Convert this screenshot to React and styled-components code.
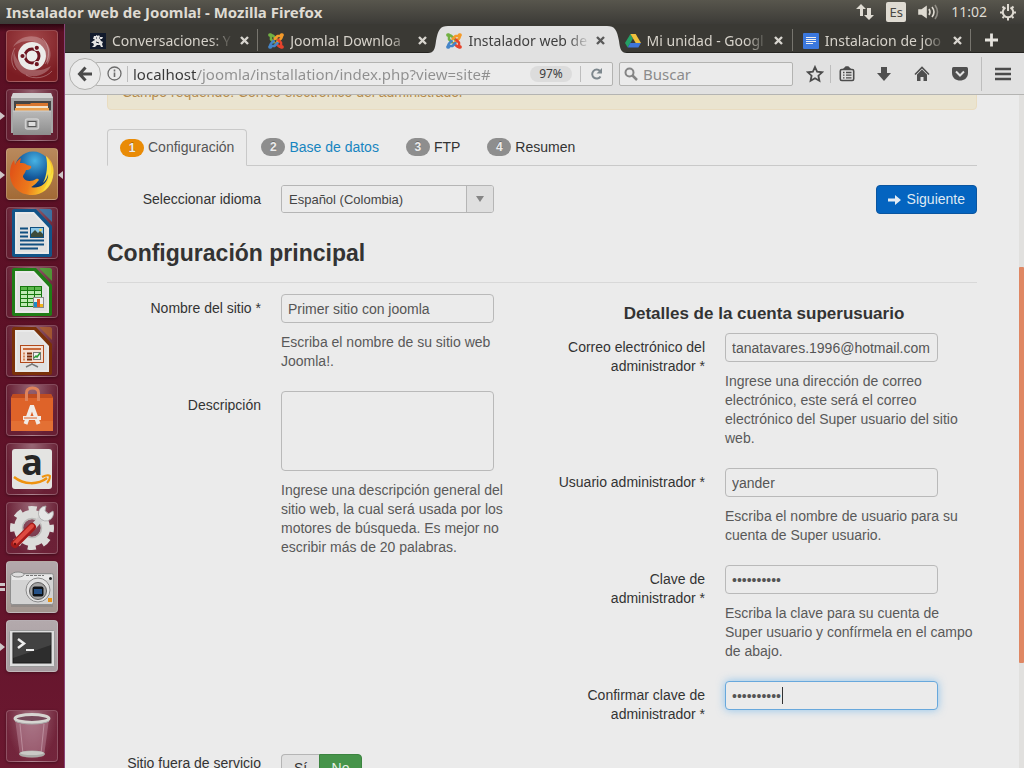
import React from "react";
import styled, { createGlobalStyle, css } from "styled-components";

const GlobalStyle = createGlobalStyle`
  *, *::before, *::after { box-sizing: border-box; }
  body { margin: 0; background: #ebebeb; overflow: hidden; }
  button, input, select, textarea { font: inherit; color: inherit; margin: 0; }
`;

const uiFont = `"Noto Sans", "Open Sans", sans-serif`;
const pageFont = `"Liberation Sans", Arial, sans-serif`;

/* ---------- desktop shell ---------- */

const Desktop = styled.div`
  display: flex;
  flex-direction: column;
  height: 100vh;
  font-family: ${uiFont};
`;

const TopPanel = styled.header`
  flex: none;
  display: flex;
  align-items: center;
  justify-content: space-between;
  height: 24px;
  padding: 0 7px 0 6px;
  background: linear-gradient(#58564d, #3c3b37);
  color: #dfdbd2;
  font-size: 14px;
  line-height: 20px;
`;

const WindowTitle = styled.h1`
  margin: 0;
  font-size: 15px;
  font-weight: 700;
  white-space: nowrap;
`;

const Indicators = styled.div`
  display: flex;
  align-items: center;
  gap: 12px;
  svg { display: block; }
`;

const Keyboard = styled.span`
  width: 20px;
  height: 20px;
  border-radius: 2px;
  background: #dfdbd2;
  color: #4a4843;
  font-size: 13px;
  line-height: 20px;
  text-align: center;
`;

const Workspace = styled.div`
  flex: 1;
  display: flex;
  min-height: 0;
`;

const Launcher = styled.nav`
  flex: none;
  display: flex;
  flex-direction: column;
  gap: 7px;
  width: 65px;
  padding: 6px;
  border-right: 1px solid #8a4478;
  background: linear-gradient(#2d0510, #5b1024 8px, #5d1127 50%, #6b1830);
`;

const Tile = styled.button`
  position: relative;
  flex: none;
  width: 52px;
  height: 52px;
  padding: 0;
  border: 1px solid rgba(255, 255, 255, 0.2);
  border-radius: 4px;
  background: ${(p) =>
    p.$tint ||
    "radial-gradient(ellipse at 50% 0, rgba(255,255,255,.36), rgba(255,255,255,.06) 75%)"};
  box-shadow: 0 1px 3px rgba(0, 0, 0, 0.35);
  > svg { display: block; width: 52px; height: 52px; margin: -1px; }
  ${(p) => p.$last && css`margin-top: auto;`}
`;

const Running = styled.i`
  position: absolute;
  top: 22px;
  left: -7px;
  border: 4px solid transparent;
  border-left: 5px solid #cfc6c8;
  border-right: 0;
`;

const Focused = styled.i`
  position: absolute;
  top: 22px;
  right: -6px;
  border: 4px solid transparent;
  border-right: 5px solid #cfc6c8;
  border-left: 0;
`;

const TwoWindows = styled.i`
  position: absolute;
  top: 21px;
  left: -7px;
  width: 5px;
  height: 8px;
  border: solid #cfc6c8;
  border-width: 3px 0;
`;

/* ---------- browser chrome ---------- */

const Browser = styled.section`
  flex: 1;
  display: flex;
  flex-direction: column;
  min-width: 0;
`;

const TabStrip = styled.div`
  flex: none;
  display: flex;
  height: 29px;
  padding-left: 15px;
  background: #3a3934;
  border-bottom: 1px solid #242320;
`;

const BrowserTab = styled.div`
  position: relative;
  flex: 1 1 0;
  display: flex;
  align-items: center;
  gap: 6px;
  min-width: 0;
  height: 29px;
  padding: 4px 9px 0 10px;
  color: ${(p) => (p.$active ? "#3f3f3f" : "#d6d2ca")};
  font-size: 14px;
  > svg { flex: none; position: relative; }
  &::after {
    content: "";
    display: ${(p) => (p.$divider ? "block" : "none")};
    position: absolute;
    right: 0;
    top: 5px;
    width: 1px;
    height: 22px;
    background: #77756e;
  }
`;

const TabTitle = styled.span`
  position: relative;
  flex: 1;
  overflow: hidden;
  white-space: nowrap;
  line-height: 20px;
  mask-image: linear-gradient(90deg, #000 calc(100% - 22px), transparent);
`;

const ClearButton = styled.button`
  position: relative;
  display: flex;
  align-items: center;
  justify-content: center;
  flex: none;
  width: ${(p) => p.$w || 10}px;
  padding: 0;
  border: 0;
  background: none;
`;

const TabShape = styled.span`
  position: absolute;
  inset: 2px -12px 0 -8px;
  display: flex;
  i { flex: 1; background: #e1e1e1; }
`;

const Toolbar = styled.div`
  flex: none;
  display: flex;
  align-items: center;
  height: 42px;
  padding-left: 4px;
  background: #e1e1e1;
  border-bottom: 1px solid #b4b4b2;
  color: #4c4c4c;
`;

const Back = styled.button`
  position: relative;
  z-index: 1;
  flex: none;
  display: flex;
  align-items: center;
  justify-content: center;
  width: 32px;
  height: 32px;
  margin-right: -6px;
  padding: 0;
  border: 1px solid #b0b0ae;
  border-radius: 50%;
  background: #ebebeb;
`;

const FieldBox = styled.div`
  display: flex;
  align-items: center;
  height: 24px;
  border: 1px solid #b3b3b1;
  border-radius: 2px;
  background: #ebebeb;
  font-size: 15px;
`;

const UrlBox = styled(FieldBox)`
  flex: 1;
  min-width: 0;
  padding: 0 4px 0 11px;
`;

const SearchBox = styled(FieldBox)`
  flex: none;
  width: 174px;
  margin-left: 6px;
  padding: 0 4px;
  gap: 5px;
  color: #8b8b8b;
  input::placeholder { color: #8b8b8b; opacity: 1; }
`;

const PlainInput = styled.input`
  flex: 1;
  min-width: 0;
  padding: 0;
  border: 0;
  outline: 0;
  background: none;
  line-height: 20px;
`;

const UrlInput = styled(PlainInput)`
  background: linear-gradient(90deg, #383838 64px, #8f8f8f 64px);
  background-clip: text;
  -webkit-background-clip: text;
  -webkit-text-fill-color: transparent;
`;

const Zoom = styled.span`
  flex: none;
  width: 42px;
  height: 16px;
  border-radius: 8px;
  background: #dcdcdc;
  color: #3c3c3c;
  font-size: 12px;
  line-height: 16px;
  text-align: center;
`;

const Bar = styled.span`
  flex: none;
  width: 1px;
  height: ${(p) => p.$h}px;
  margin: ${(p) => p.$m || "0"};
  background: #bdbdbd;
`;

/* ---------- page ---------- */

const Viewport = styled.div`
  flex: 1;
  display: flex;
  min-height: 0;
  background: #ebebeb;
`;

const Page = styled.main`
  flex: 1;
  min-width: 0;
  overflow: hidden;
  padding: 0 42px;
  color: #333;
  font: 14px/19px ${pageFont};
`;

const Scrollbar = styled.div`
  flex: none;
  width: 5px;
  padding-top: 172px;
  background: #e1e0de;
  &::before {
    content: "";
    display: block;
    height: 79%;
    border-radius: 1px;
    background: #df8763;
  }
`;

const Alert = styled.div`
  margin-top: -22px;
  padding: 9px 14px 7px;
  border: 1px solid #e9dcc0;
  border-radius: 4px;
  background: #eae4d0;
  color: #b58b4c;
`;

const Steps = styled.ol`
  display: flex;
  gap: 1px;
  margin: 19px 0;
  padding: 0;
  list-style: none;
  border-bottom: 1px solid #c9c9c9;
`;

const Step = styled.li`
  display: flex;
  align-items: center;
  gap: 4px;
  height: 36px;
  margin-bottom: -1px;
  padding: 0 12px;
  border: 1px solid transparent;
  border-radius: 4px 4px 0 0;
  color: ${(p) => (p.$active ? "#555" : "#333")};
  ${(p) =>
    p.$active &&
    css`
      height: 37px;
      border-color: #c9c9c9;
      border-bottom-color: #ebebeb;
      background: #ebebeb;
    `}
  a { color: #1785c0; text-decoration: none; }
`;

const Badge = styled.span`
  width: 24px;
  height: 18px;
  border-radius: 9px;
  background: ${(p) => (p.$active ? "#e98b06" : "#8e8e8e")};
  color: #ebebeb;
  font-size: 12px;
  font-weight: 700;
  line-height: 18px;
  text-align: center;
  text-shadow: 0 -1px 0 rgba(0, 0, 0, 0.25);
`;

const TopRow = styled.div`
  display: flex;
  justify-content: space-between;
  align-items: flex-start;
`;

const Row = styled.div`
  display: grid;
  grid-template-columns: 154px 1fr;
  column-gap: 20px;
  margin-bottom: ${(p) => (p.$tight ? 0 : 20)}px;
`;

const Label = styled.label`
  padding-top: ${(p) => (p.$flush ? 0 : 5)}px;
  text-align: right;
`;

const inputLook = css`
  display: block;
  width: 213px;
  border: 1px solid #b9b9b9;
  border-radius: 4px;
  background: #ebebeb;
  color: #555;
  outline: 0;
`;

const TextInput = styled.input`
  ${inputLook}
  height: 29px;
  padding: 0 6px;
  ${(p) =>
    p.$focused &&
    css`
      border-color: #68a8dc;
      box-shadow: 0 0 8px rgba(82, 168, 236, 0.6);
      background: linear-gradient(#333, #333) 56px 50% / 1px 17px no-repeat #ebebeb;
    `}
`;

const TextArea = styled.textarea`
  ${inputLook}
  height: 80px;
  resize: none;
`;

const Help = styled.p`
  margin: 10px 0 0;
  color: #595959;
`;

const SelectBox = styled.div`
  display: flex;
  width: 213px;
  height: 28px;
  border: 1px solid #b5b5b5;
  border-radius: 3px;
  overflow: hidden;
  color: #444;
  font-size: 13px;
  select {
    flex: 1;
    padding: 0 7px;
    border: 0;
    border-right: 1px solid #b5b5b5;
    outline: 0;
    appearance: none;
    background: #ebebeb;
  }
  span {
    display: flex;
    align-items: center;
    justify-content: center;
    width: 26px;
    background: #dfdfdf;
  }
`;

const NextButton = styled.button`
  display: flex;
  align-items: center;
  gap: 6px;
  height: 29px;
  padding: 0 11px;
  border: 1px solid #0a55a0;
  border-radius: 4px;
  background: #0464c0;
  color: #dfe9f3;
`;

const SectionTitle = styled.h2`
  margin: 21px 0 11px;
  padding-bottom: 11px;
  border-bottom: 1px solid #d8d8d8;
  font-size: 23px;
  line-height: 36px;
`;

const Columns = styled.div`
  display: grid;
  grid-template-columns: 1fr 1fr;
  column-gap: 18px;
`;

const SiteColumn = styled.div`
  padding-right: 16px;
`;

const AccountTitle = styled.h3`
  margin: 10px 0;
  font-size: 17px;
  line-height: 19px;
  text-align: center;
`;

const Toggle = styled.div`
  display: flex;
  height: 29px;
`;

const ToggleButton = styled.button`
  width: ${(p) => (p.$on ? 43 : 38)}px;
  padding: 0;
  border: 1px solid ${(p) => (p.$on ? "#3c8440" : "#b5b5b5")};
  border-right-width: ${(p) => (p.$on ? 1 : 0)}px;
  border-radius: ${(p) => (p.$on ? "0 4px 4px 0" : "4px 0 0 4px")};
  background: ${(p) => (p.$on ? "#46944a" : "#e1e1e1")};
  color: ${(p) => (p.$on ? "#e4eee4" : "#333")};
`;

const StatusSection = styled.div`
  width: 50%;
  padding: 10px 9px 0 0;
`;

/* ---------- small drawings ---------- */

const Close = ({ c }) => (
  <svg width="9" height="9" viewBox="0 0 9 9">
    <path d="M1 1l7 7M8 1L1 8" stroke={c} strokeWidth="2.4" />
  </svg>
);

const Joomla = () => (
  <svg width="16" height="16" viewBox="0 0 16 16" fill="none" strokeWidth="2.5" strokeLinecap="round" strokeLinejoin="round">
    <path d="M2.2 2.2C5 1.5 6 3.5 8 5.5l2 2M3 3v3.4l3 3" stroke="#72b043" />
    <path d="M13.8 2.2C14.5 5 12.5 6 10.5 8l-2 2M13 3H9.6l-3 3" stroke="#f49a2a" />
    <path d="M13.8 13.8C11 14.5 10 12.5 8 10.5M13 13V9.6l-3-3" stroke="#e6432c" />
    <path d="M2.2 13.8C1.5 11 3.5 10 5.5 8M3 13h3.4l3-3" stroke="#4585c8" />
    <path d="M1.8 2h.8" stroke="#72b043" strokeWidth="3.4" />
    <path d="M13.4 2h.8" stroke="#f49a2a" strokeWidth="3.4" />
    <path d="M13.4 14h.8" stroke="#e6432c" strokeWidth="3.4" />
    <path d="M1.8 14h.8" stroke="#4585c8" strokeWidth="3.4" />
  </svg>
);

const Knight = () => (
  <svg width="16" height="16" viewBox="0 0 16 16">
    <rect width="16" height="16" fill="#111a2c" />
    <path d="M3 6l1-3h2V2l2 1 1-1 1 2h3l-1 2h-2l1 2 2 1-1 2 1 3h-2l-1-2H7l-2 2H2l2-2-1-2H1l2-2 2-1-1-1z" fill="#e2e2e2" />
    <path d="M6 5h1M9 5h1M6 9l3 1" stroke="#111a2c" />
  </svg>
);

const Drive = () => (
  <svg width="16" height="16" viewBox="0 0 16 16">
    <path d="M5.4 1L8 5.6 2.7 14.6 0 10z" fill="#25a065" />
    <path d="M5.4 1h5.3L16 10h-5.3z" fill="#f0c03c" />
    <path d="M5.3 10H16l-2.7 4.6H2.7z" fill="#3f75d8" />
  </svg>
);

const Docs = () => (
  <svg width="16" height="16" viewBox="0 0 16 16">
    <rect width="16" height="16" rx="1" fill="#3b78de" />
    <path d="M3 4.5h10M3 6.5h10M3 8.5h10M3 10.5h7" stroke="#eee" />
  </svg>
);

const Curve = ({ flip }) => (
  <svg width="20" height="27" viewBox="0 0 20 27">
    <path
      d={flip ? "M20 27C14 27 13 23 12 15C10 4 8 0 0 0V27Z" : "M0 27C6 27 7 23 8 15C10 4 12 0 20 0V27Z"}
      fill="#e1e1e1"
    />
  </svg>
);

const UbuntuArt = () => (
  <svg viewBox="0 0 52 52">
    <path d="M7 17C13 4 34 2 42 15c4 7 3 15-1 20 0-12-6-24-18-24-8 0-13 3-16 6z" fill="#fff" opacity=".25" />
    <path d="M8 21c-3 13 5 24 17 25 10 1 17-4 20-10-8 5-18 6-26 1C13 33 9 28 8 21z" fill="#fff" opacity=".25" />
    <path d="M36 8c7 5 9 18 3 26M10 40c-6-6-5-16-1-22M20 45c8 5 20 3 26-4" fill="none" stroke="#fff" opacity=".3" />
    <circle cx="26" cy="26" r="14" fill="#ececea" />
    <circle cx="26" cy="26" r="7" fill="none" stroke="#6d1520" strokeWidth="3" />
    <g stroke="#ececea" strokeWidth="1.2" fill="#6d1520">
      <circle cx="16.5" cy="26" r="2.7" />
      <circle cx="30.8" cy="17.8" r="2.7" />
      <circle cx="30.8" cy="34.2" r="2.7" />
    </g>
  </svg>
);

const FilesArt = () => (
  <svg viewBox="0 0 52 52">
    <defs>
      <linearGradient id="drawer" x1="0" y1="0" x2="0" y2="1">
        <stop offset="0" stopColor="#b9b9b9" />
        <stop offset="1" stopColor="#8d8d8d" />
      </linearGradient>
    </defs>
    <path d="M7 4h38l2 5v35H5V9z" fill="#a7a7a7" />
    <path d="M7 4h38l2 5H5z" fill="#d4d4d4" />
    <path d="M8 12h37v11H8z" fill="#454545" />
    <path d="M10 15h14l1-1h17v8H10z" fill="#d8762f" />
    <path d="M10 17h32v2H10z" fill="#f2e3cd" />
    <path d="M9 19h34v3H9z" fill="#eba04c" />
    <path d="M7 22h38v24H7z" fill="url(#drawer)" />
    <path d="M7 22h38" stroke="#cfcfcf" />
    <rect x="19.500" y="30" width="13" height="10" rx="2" fill="#aaa" stroke="#d0d0d0" strokeWidth="1.500" />
    <rect x="22" y="32.500" width="8" height="5" fill="#ddd" stroke="#555" />
  </svg>
);

const FirefoxArt = () => (
  <svg viewBox="0 0 52 52">
    <defs>
      <radialGradient id="globe" cx=".55" cy=".25" r=".75">
        <stop offset="0" stopColor="#48b3e4" />
        <stop offset=".6" stopColor="#155a9c" />
        <stop offset="1" stopColor="#0b2f66" />
      </radialGradient>
      <linearGradient id="fox" x1="0" y1="0" x2="1" y2=".3">
        <stop offset="0" stopColor="#dd4a16" />
        <stop offset=".6" stopColor="#ed7a1c" />
        <stop offset="1" stopColor="#f9d530" />
      </linearGradient>
    </defs>
    <circle cx="27" cy="22" r="18.500" fill="url(#globe)" />
    <path d="M40 8c6 4 9 12 7 21-2 11-11 18-21 18C13 47 4 38 4 26c0-6 1-10 4-14l1 5c1-3 3-5 6-7l-1 5c3 0 5 0 7 2l4 1c1 2-1 4-5 4-1 4-3 4-3 7 3 6 10 4 13 2 2-1 4 1 2 2-3 4-7 6-7 6 7 2 15-2 17-10 2-6 1-13-2-21z" fill="url(#fox)" />
    <path d="M40 8c5 5 7 13 4 20 2-2 3-4 3-6 1 9-4 18-10 21 4-6 6-11 5-17-1 5-3 7-5 9 4-8 5-18 3-27z" fill="#f8df45" />
  </svg>
);

const Sheet = ({ dark, light, children }) => (
  <svg viewBox="0 0 52 52">
    <path d="M8 2h22l16 17v29c0 1-1 2-2 2H8c-1 0-2-1-2-2V4c0-1 1-2 2-2z" fill={dark} />
    <path d="M33 2h11c1 0 2 1 2 2v11z" fill={light} opacity=".75" />
    <path d="M9 5h19l15 16v26H9z" fill="#e9e9e9" />
    <path d="M11 7h16l14 15v23H11z" fill="#dadada" opacity=".5" />
    {children}
  </svg>
);

const WriterArt = () => (
  <Sheet dark="#125488" light="#2d86bd">
    <path d="M14 21.500h8M14 25.500h8M14 29.500h8M14 33.500h24M14 37.500h24M14 41.500h18" stroke="#104f80" strokeWidth="2" />
    <rect x="24.500" y="20.500" width="13" height="10" fill="#8dc8e8" stroke="#104f80" />
    <path d="M25 30v-3l4-4 3 3 2-2 3 3v3z" fill="#3c4b3a" />
    <circle cx="34.500" cy="23" r="1.300" fill="#f4d34a" />
  </Sheet>
);

const CalcArt = () => (
  <Sheet dark="#1f7d16" light="#45b533">
    <rect x="14" y="20" width="22" height="21" fill="#bfe9b3" />
    <path d="M14 20h22v4H14z" fill="#5cb84c" />
    <path d="M14 20.500h22M14 24.500h22M14 28.500h22M14 32.500h22M14 36.500h22M14 40.500h22M14.500 20v21M21.500 20v21M28.500 20v21M35.500 20v21" stroke="#18780f" />
    <rect x="27.500" y="31.500" width="10" height="10" fill="#eee" stroke="#888" />
    <path d="M28 36h3v5h-3z" fill="#1a8ac8" />
    <path d="M31 33h3v8h-3z" fill="#e2571f" />
    <path d="M34 38h3v3h-3z" fill="#efb51c" />
  </Sheet>
);

const ImpressArt = () => (
  <Sheet dark="#7a3109" light="#b0622b">
    <rect x="14.500" y="20.500" width="23" height="17" fill="#f3dfd2" stroke="#b1491b" />
    <path d="M17 24h18" stroke="#c96a3c" strokeWidth="2" />
    <path d="M17 28.500h2M17 31.500h2M17 34.500h2" stroke="#d68a5c" strokeWidth="2" />
    <path d="M21 28.500h5M21 31.500h5M21 34.500h5" stroke="#7a2d0b" strokeWidth="2" />
    <rect x="27.500" y="27.500" width="7" height="7" fill="#f0f0f0" stroke="#777" />
    <path d="M28 33l2-2 1 1 3-4" stroke="#2a9a35" strokeWidth="1.500" fill="none" />
    <path d="M26 38v2M20 42l6-3 6 3" stroke="#777" strokeWidth="1.500" fill="none" />
  </Sheet>
);

const SoftwareArt = () => (
  <svg viewBox="0 0 52 52">
    <path d="M7 10h38l2 4v33H5V14z" fill="#de6329" />
    <path d="M7 10h38l2 4H5z" fill="#bf4c20" />
    <path d="M5 37h42v10H5z" fill="#e67a3c" opacity=".6" />
    <path d="M20.500 17V9c0-4 3-5 6-5s6 1 6 5v8" fill="none" stroke="#e0835a" strokeWidth="3" />
    <path d="M19.500 40l6-17h1l6 17" fill="none" stroke="#f1ebe6" strokeWidth="4" />
    <path d="M17 32h18v4H17z" fill="#f1ebe6" />
    <path d="M18 34h13" stroke="#de6329" />
  </svg>
);

const AmazonArt = () => (
  <svg viewBox="0 0 52 52">
    <rect x="6" y="6" width="40" height="40" rx="3" fill="#e4e4e2" />
    <text x="26" y="32" textAnchor="middle" fontFamily="Open Sans, sans-serif" fontWeight="700" fontSize="36" fill="#262626">a</text>
    <path d="M8 34c10 8 24 8 33 1" fill="none" stroke="#ee930f" strokeWidth="2.500" />
    <path d="M36 34c4-2 7-2 8-1 0 2-1 5-3 7" fill="none" stroke="#ee930f" strokeWidth="2" />
  </svg>
);

const SettingsArt = () => (
  <svg viewBox="0 0 52 52">
    <circle cx="26" cy="26" r="13.500" fill="none" stroke="#dcdcda" strokeWidth="9" />
    <circle cx="26" cy="26" r="19" fill="none" stroke="#dcdcda" strokeWidth="6" strokeDasharray="8 6.923" strokeDashoffset="4" />
    <circle cx="26" cy="26" r="9.500" fill="none" stroke="#b9b9b7" strokeWidth="1.500" />
    <path d="M27 25l10-11" stroke="#cfcfcf" strokeWidth="6" />
    <path d="M47 9a7.500 7.500 0 1 1-7-5l-1 5 3 3z" fill="#e6e6e6" stroke="#a8a8a8" strokeWidth=".8" />
    <path d="M9 42l17-17" stroke="#a61a1a" strokeWidth="8" strokeLinecap="round" />
    <path d="M9 41l17-17" stroke="#dd4a40" strokeWidth="4" strokeLinecap="round" />
    <circle cx="9" cy="42" r="1.300" fill="#6d1010" />
  </svg>
);

const CameraArt = () => (
  <svg viewBox="0 0 52 52">
    <path d="M5 43h42v3H5z" fill="#777" opacity=".4" />
    <rect x="4.500" y="12.500" width="43" height="31" rx="2" fill="#d3d3d3" stroke="#8f8f8f" />
    <path d="M6 14h40v5H6z" fill="#e8e8e8" />
    <ellipse cx="12" cy="13.500" rx="6" ry="2.500" fill="#ddd" stroke="#888" />
    <path d="M20 14.500h18" stroke="#777" strokeDasharray="3 1" />
    <circle cx="32" cy="29" r="12" fill="#e2e2e2" stroke="#8b8b8b" />
    <circle cx="32" cy="30" r="8.500" fill="#a5a5a5" stroke="#5d5d5d" />
    <rect x="26.500" y="25.500" width="11" height="10" rx="2" fill="#0e1216" />
    <path d="M28 28h8v5h-8z" fill="#245086" />
    <circle cx="44.500" cy="17.500" r="1.500" fill="#222" />
    <path d="M42 37h4v4h-4z" fill="#e89419" />
  </svg>
);

const TerminalArt = () => (
  <svg viewBox="0 0 52 52">
    <rect x="3.500" y="10.500" width="45" height="36" rx="1" fill="#dedede" stroke="#9b9b9b" />
    <rect x="7" y="13" width="38" height="30" fill="#2d2d2d" stroke="#1a1a1a" />
    <path d="M7 13h38v12L7 38z" fill="#fff" opacity=".1" />
    <path d="M12 19l6 4.500-6 4.500" fill="none" stroke="#ededed" strokeWidth="2.500" />
    <path d="M20 30h8" stroke="#ededed" strokeWidth="2" />
  </svg>
);

const TrashArt = () => (
  <svg viewBox="0 0 52 52">
    <path d="M9 9h34l-5 37c-6 2-18 2-24 0z" fill="#c99aac" opacity=".4" />
    <path d="M14 14l3 30M38 14l-3 30" stroke="#e6cdd6" opacity=".4" />
    <ellipse cx="26" cy="44" rx="13" ry="3.500" fill="#aaa9a6" />
    <ellipse cx="26" cy="43" rx="12" ry="2" fill="#cac9c6" />
    <ellipse cx="26" cy="8.500" rx="17" ry="4" fill="#76495a" stroke="#d6d5d1" strokeWidth="3" />
    <path d="M9 11c6 4 28 4 34 0" fill="none" stroke="#aaa" />
  </svg>
);

/* ---------- data ---------- */

const launcherItems = [
  { name: "Buscar", art: <UbuntuArt />, tint: "radial-gradient(circle at 50% 20%, #a34a4c, #7b1c22 80%)" },
  { name: "Archivos", art: <FilesArt />, marks: <Running /> },
  { name: "Firefox", art: <FirefoxArt />, tint: "linear-gradient(#b9895c, #a26a36)", marks: <><Running /><Focused /></> },
  { name: "Writer", art: <WriterArt /> },
  { name: "Calc", art: <CalcArt /> },
  { name: "Impress", art: <ImpressArt /> },
  { name: "Software", art: <SoftwareArt /> },
  { name: "Amazon", art: <AmazonArt /> },
  { name: "Sistema", art: <SettingsArt /> },
  { name: "Captura", art: <CameraArt />, tint: "linear-gradient(#b3a9ac, #a3968f)", marks: <TwoWindows /> },
  { name: "Terminal", art: <TerminalArt />, tint: "linear-gradient(#b3a9ac, #a69ca0)", marks: <Running /> },
  { name: "Papelera", art: <TrashArt />, last: true },
];

const browserTabs = [
  { title: "Conversaciones: Y", icon: <Knight />, divider: true },
  { title: "Joomla! Downloa", icon: <Joomla /> },
  { title: "Instalador web de", icon: <Joomla />, active: true },
  { title: "Mi unidad - Googl", icon: <Drive />, divider: true },
  { title: "Instalacion de joo", icon: <Docs />, divider: true },
];

const Field = ({ id, label, help, ...rest }) => (
  <Row>
    <Label htmlFor={id}>{label}</Label>
    <div>
      <TextInput id={id} {...rest} />
      {help && <Help>{help}</Help>}
    </div>
  </Row>
);

export default function App() {
  return (
    <Desktop>
      <GlobalStyle />
      <TopPanel>
        <WindowTitle>Instalador web de Joomla! - Mozilla Firefox</WindowTitle>
        <Indicators>
          <svg width="18" height="18" viewBox="0 0 18 18" fill="#dfdbd2">
            <path d="M5 1l5 5H7v7H4V6H0z M11 5h4v7h3l-5 5-5-5h3z" />
          </svg>
          <Keyboard>Es</Keyboard>
          <svg width="21" height="16" viewBox="0 0 21 16" fill="none" stroke="#dfdbd2" strokeWidth="1.600">
            <path d="M1 6h3l4-3v10l-4-3H1z" fill="#dfdbd2" />
            <path d="M11 5q2 3 0 6M14 3q4 5 0 10" />
            <path d="M17 1q5 7 0 14" opacity=".45" />
          </svg>
          <time>11:02</time>
          <svg width="18" height="18" viewBox="0 0 18 18" fill="none" stroke="#dfdbd2" strokeWidth="2">
            <path d="M6.500 4.500a5.200 5.200 0 1 0 5 0" />
            <path d="M9 1v7M3.500 3.500l1.500 1.500M14.500 3.500L13 5M1 9.500h2.500M14.500 9.500H17M3.500 15L5 13.500M14.500 15L13 13.500M9 15v2.500" />
          </svg>
        </Indicators>
      </TopPanel>

      <Workspace>
        <Launcher aria-label="Lanzador">
          {launcherItems.map((item) => (
            <Tile key={item.name} aria-label={item.name} $tint={item.tint} $last={item.last}>
              {item.art}
              {item.marks}
            </Tile>
          ))}
        </Launcher>

        <Browser>
          <TabStrip>
            {browserTabs.map((tab) => (
              <BrowserTab key={tab.title} $active={tab.active} $divider={tab.divider}>
                {tab.active && (
                  <TabShape>
                    <Curve />
                    <i />
                    <Curve flip />
                  </TabShape>
                )}
                {tab.icon}
                <TabTitle>{tab.title}</TabTitle>
                <ClearButton aria-label="Cerrar pestaña">
                  <Close c={tab.active ? "#5a5a5a" : "#d8d5cf"} />
                </ClearButton>
              </BrowserTab>
            ))}
            <ClearButton $w={53} aria-label="Nueva pestaña">
              <svg width="40" height="20" viewBox="0 0 40 20">
                <path d="M7 12h13M13.500 5.500v13" stroke="#e6e4de" strokeWidth="2.800" />
              </svg>
            </ClearButton>
          </TabStrip>

          <Toolbar>
            <Back aria-label="Atrás">
              <svg width="16" height="16" viewBox="0 0 16 16" fill="none" stroke="#4a4a4a" strokeWidth="3">
                <path d="M8.500 1.500L2.500 8l6 6.500M3 8h12" />
              </svg>
            </Back>
            <UrlBox>
              <svg width="15" height="15" viewBox="0 0 15 15" fill="none" stroke="#6c6c6c">
                <circle cx="7.500" cy="7.500" r="6.500" strokeWidth="1.300" />
                <path d="M7.500 6.500v4.500M7.500 3.500v2" strokeWidth="1.600" />
              </svg>
              <Bar $h={16} $m="0 5px" />
              <UrlInput aria-label="Dirección" defaultValue="localhost/joomla/installation/index.php?view=site#" />
              <Zoom>97%</Zoom>
              <Bar $h={16} $m="0 5px 0 8px" />
              <ClearButton $w={22} aria-label="Recargar">
                <svg width="14" height="14" viewBox="0 0 14 14" fill="none" stroke="#7d878d" strokeWidth="2">
                  <path d="M10.500 9.500A4.500 4.500 0 1 1 10 4" />
                  <path d="M12 1v5.500H6.500z" fill="#7d878d" stroke="none" />
                </svg>
              </ClearButton>
            </UrlBox>
            <SearchBox>
              <svg width="14" height="14" viewBox="0 0 14 14" fill="none" stroke="#858585" strokeWidth="2">
                <circle cx="5.500" cy="5.500" r="4" />
                <path d="M8.500 8.500l4.500 4.500" strokeWidth="2.500" />
              </svg>
              <PlainInput aria-label="Buscar" placeholder="Buscar" />
            </SearchBox>
            <Bar $h={0} $m="0 3px" />
            <ClearButton $w={30} aria-label="Marcar página">
              <svg width="18" height="18" viewBox="0 0 18 18" fill="none" stroke="#4c4c4c" strokeWidth="1.800">
                <path d="M9 2l2.100 4.700 5 .6-3.700 3.400 1 5L9 13.200l-4.400 2.500 1-5L1.900 7.300l5-.6z" />
              </svg>
            </ClearButton>
            <Bar $h={18} />
            <ClearButton $w={31} aria-label="Marcadores">
              <svg width="16" height="16" viewBox="0 0 16 16" fill="none" stroke="#4c4c4c" strokeWidth="1.600">
                <rect x="1.300" y="3.500" width="13.400" height="11" rx="1.500" />
                <path d="M5 3l2-2h2l2 2z" fill="#4c4c4c" />
                <path d="M4 6.500h1.500M7 6.500h5.500M4 9.200h1.500M7 9.200h5.500M4 11.900h1.500M7 11.900h5.500" strokeWidth="1.300" />
              </svg>
            </ClearButton>
            <Bar $h={0} $m="0 2px 0 0" />
            <ClearButton $w={38} aria-label="Descargas">
              <svg width="16" height="16" viewBox="0 0 16 16" fill="#4f4f4f">
                <path d="M5 1h6v6h4l-7 8-7-8h4z" />
              </svg>
            </ClearButton>
            <ClearButton $w={38} aria-label="Inicio">
              <svg width="16" height="16" viewBox="0 0 16 16" fill="#4f4f4f">
                <path d="M8 3.500l5 5V15H9.500v-4h-3v4H3V8.500z" />
                <path d="M1 8.500l7-7 7 7" fill="none" stroke="#4f4f4f" strokeWidth="1.600" />
              </svg>
            </ClearButton>
            <ClearButton $w={38} aria-label="Pocket">
              <svg width="16" height="16" viewBox="0 0 16 16">
                <path d="M1.500 1h13Q16 1 16 2.500V7c0 10-16 10-16 0V2.500Q0 1 1.500 1z" fill="#4f4f4f" />
                <path d="M4 5.500l4 4 4-4" fill="none" stroke="#e1e1e1" strokeWidth="2" />
              </svg>
            </ClearButton>
            <Bar $h={34} $m="0 0 0 2px" />
            <ClearButton $w={42} aria-label="Menú">
              <svg width="16" height="14" viewBox="0 0 16 14">
                <path d="M0 2h16M0 7h16M0 12h16" stroke="#4c4c4c" strokeWidth="2.600" />
              </svg>
            </ClearButton>
          </Toolbar>

          <Viewport>
            <Page>
              <Alert>Campo requerido: Correo electrónico del administrador</Alert>

              <Steps>
                <Step $active><Badge $active>1</Badge>Configuración</Step>
                <Step><Badge>2</Badge><a href="#base">Base de datos</a></Step>
                <Step><Badge>3</Badge>FTP</Step>
                <Step><Badge>4</Badge>Resumen</Step>
              </Steps>

              <TopRow>
                <Row $tight>
                  <Label htmlFor="lang">Seleccionar idioma</Label>
                  <SelectBox>
                    <select id="lang" defaultValue="es">
                      <option value="es">Español (Colombia)</option>
                    </select>
                    <span>
                      <svg width="8" height="6" viewBox="0 0 8 6"><path d="M0 0h8L4 6z" fill="#858585" /></svg>
                    </span>
                  </SelectBox>
                </Row>
                <NextButton>
                  <svg width="13" height="10" viewBox="0 0 13 10" fill="#e4ecf4"><path d="M0 3.500h7V0l6 5-6 5V6.500H0z" /></svg>
                  Siguiente
                </NextButton>
              </TopRow>

              <SectionTitle>Configuración principal</SectionTitle>

              <Columns>
                <SiteColumn>
                  <Field id="site" label="Nombre del sitio *" defaultValue="Primer sitio con joomla" help="Escriba el nombre de su sitio web Joomla!." />
                  <Row>
                    <Label htmlFor="desc">Descripción</Label>
                    <div>
                      <TextArea id="desc" />
                      <Help>
                        Ingrese una descripción general del sitio web, la cual será usada por los motores de
                        búsqueda. Es mejor no escribir más de 20 palabras.
                      </Help>
                    </div>
                  </Row>
                </SiteColumn>
                <div>
                  <AccountTitle>Detalles de la cuenta superusuario</AccountTitle>
                  <Field
                    id="mail"
                    label={"Correo electrónico del administrador\u00a0*"}
                    defaultValue="tanatavares.1996@hotmail.com"
                    help="Ingrese una dirección de correo electrónico, este será el correo electrónico del Super usuario del sitio web."
                  />
                  <Field
                    id="user"
                    label={"Usuario administrador\u00a0*"}
                    defaultValue="yander"
                    help="Escriba el nombre de usuario para su cuenta de Super usuario."
                  />
                  <Field
                    id="pass"
                    type="password"
                    label={<>Clave de<br />administrador *</>}
                    defaultValue="joomla2016"
                    help="Escriba la clave para su cuenta de Super usuario y confírmela en el campo de abajo."
                  />
                  <Field id="pass2" type="password" label={"Confirmar clave de administrador\u00a0*"} defaultValue="joomla2016" $focused />
                </div>
              </Columns>

              <StatusSection>
                <Row>
                  <Label as="span" id="offline" $flush>Sitio fuera de servicio</Label>
                  <Toggle role="group" aria-labelledby="offline">
                    <ToggleButton>Sí</ToggleButton>
                    <ToggleButton $on>No</ToggleButton>
                  </Toggle>
                </Row>
              </StatusSection>
            </Page>
            <Scrollbar />
          </Viewport>
        </Browser>
      </Workspace>
    </Desktop>
  );
}
